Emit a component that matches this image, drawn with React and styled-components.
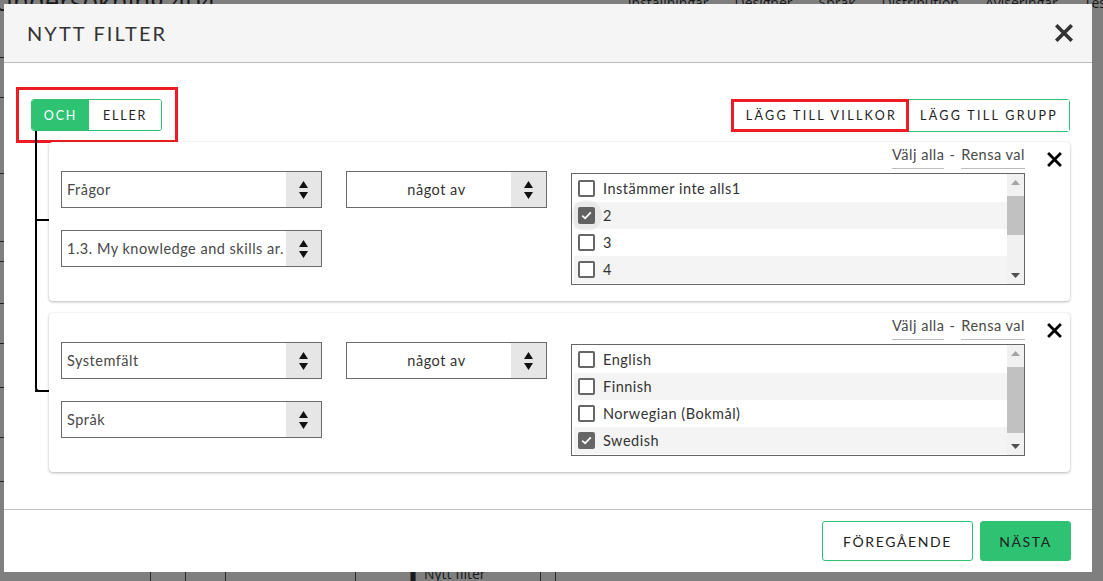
import React from "react";
import styled, { createGlobalStyle, css } from "styled-components";

const GREEN = "#2ec273";
const RED = "#ed1c24";

const Global = createGlobalStyle`
  html, body { margin: 0; padding: 0; width: 1103px; height: 581px; overflow: hidden; }
  body { font-family: Lato, "Open Sans", sans-serif; color: #333; }
  * { box-sizing: border-box; }
`;

/* ---------- page behind the modal ---------- */
const Page = styled.div`
  position: relative;
  width: 1103px;
  height: 581px;
  background: #fff;
  display: flex;
  flex-direction: column;
  overflow: hidden;
`;
const BackTop = styled.div`
  display: flex;
  justify-content: space-between;
  align-items: flex-end;
  height: 14px;
  margin-top: -4px;
  font-family: "Open Sans", sans-serif;
  color: #333;
`;
const BackTitle = styled.div`
  font-size: 26px;
  line-height: 18px;
  margin-left: -6px;
`;
const BackTabs = styled.div`
  display: flex;
  gap: 26px;
  font-size: 14px;
  line-height: 14px;
  margin-right: -8px;
`;
const BackMain = styled.div`
  flex: 1;
  display: flex;
  flex-direction: column;
`;
const BackRow = styled.div`
  height: ${(p) => p.$h}px;
  border-bottom: 1px solid #444;
  width: 12px;
`;
const BackBottom = styled.div`
  height: 16px;
  display: flex;
  align-items: center;
  padding-left: 150px;
  font-size: 14px;
  font-family: "Open Sans", sans-serif;
`;
const BackCell = styled.div`
  width: ${(p) => p.$w}px;
  height: 16px;
  border-left: 1px solid #555;
  display: flex;
  align-items: center;
  justify-content: center;
  gap: 6px;
`;
const Backdrop = styled.div`
  position: absolute;
  inset: 0;
  background: rgba(0, 0, 0, 0.5);
`;

/* ---------- modal ---------- */
const Modal = styled.div`
  position: absolute;
  top: 4px;
  left: 4px;
  width: 1088px;
  height: 568px;
  background: #fff;
  display: flex;
  flex-direction: column;
`;
const Header = styled.div`
  height: 59px;
  flex: none;
  background: #f5f5f5;
  border-bottom: 1px solid #bcbcbc;
  display: flex;
  align-items: center;
  justify-content: space-between;
  padding: 0 19px 0 23px;
`;
const Title = styled.h1`
  margin: 0;
  font-size: 20px;
  font-weight: 400;
  letter-spacing: 2.1px;
  color: #333;
`;
const IconButton = styled.button`
  border: none;
  background: transparent;
  padding: 0;
  display: flex;
  cursor: pointer;
  color: ${(p) => p.$color || "#333"};
`;
const Body = styled.div`
  flex: 1;
  padding: 36px 22px 0 27px;
`;
const TopRow = styled.div`
  display: flex;
  justify-content: space-between;
  align-items: flex-start;
  height: 32px;
`;
const Highlight = styled.div`
  position: relative;
  display: flex;
  &::after {
    content: "";
    position: absolute;
    pointer-events: none;
    border: 3px solid ${RED};
    ${(p) =>
      p.$wide
        ? css`inset: -12px -16px -12px -15px;`
        : css`inset: -1px 0 -1px -3px;`}
  }
`;
const Toggle = styled.div`
  display: flex;
  height: 32px;
  border: 1px solid ${GREEN};
  border-radius: 3px;
  overflow: hidden;
`;
const ToggleOption = styled.button`
  border: none;
  font-family: inherit;
  font-size: 12.5px;
  letter-spacing: 1.8px;
  padding: 0;
  width: ${(p) => p.$w}px;
  background: ${(p) => (p.$active ? GREEN : "#fff")};
  color: ${(p) => (p.$active ? "#fff" : "#222")};
  cursor: pointer;
`;
const ButtonGroup = styled.div`
  display: flex;
  height: 33px;
  border: 1px solid ${GREEN};
  border-radius: 3px;
`;
const GroupButton = styled.button`
  border: none;
  background: #fff;
  font-family: inherit;
  font-size: 12.5px;
  letter-spacing: 2.3px;
  color: #222;
  padding: 0 ${(p) => p.$pad || 12}px;
  height: 31px;
  cursor: pointer;
`;

const Tree = styled.div`
  position: relative;
  padding: 11px 0 0 18px;
  display: flex;
  flex-direction: column;
  gap: 12px;
  &::before {
    content: "";
    position: absolute;
    left: 4px;
    top: 0;
    bottom: 80px;
    width: 13px;
    border-left: 2px solid #000;
    border-bottom: 2px solid #000;
    border-bottom-left-radius: 4px;
  }
`;
const Card = styled.div`
  position: relative;
  height: 159px;
  background: #fff;
  border-radius: 4px;
  box-shadow: 0 1px 3px rgba(0, 0, 0, 0.28), 0 0 1px rgba(0, 0, 0, 0.15);
  display: grid;
  grid-template-columns: 261px 201px 454px 1fr;
  column-gap: 24px;
  padding-left: 12px;
  &::before {
    content: "";
    position: absolute;
    left: -14px;
    top: 77px;
    width: 14px;
    height: 2px;
    background: #000;
  }
`;
const SelectColumn = styled.div`
  padding-top: 29px;
  display: flex;
  flex-direction: column;
  gap: 22px;
`;
const SelectBox = styled.div`
  height: 37px;
  border: 1px solid #6b6b6b;
  display: flex;
  background: #fff;
`;
const SelectText = styled.div`
  flex: 1;
  display: flex;
  align-items: center;
  justify-content: ${(p) => (p.$center ? "center" : "flex-start")};
  padding-left: ${(p) => (p.$center ? 15 : 5)}px;
  font-size: 14.5px;
  letter-spacing: 0.5px;
  color: ${(p) => (p.$center ? "#333" : "#484848")};
  white-space: nowrap;
  overflow: hidden;
`;
const SelectArrows = styled.div`
  width: 35px;
  flex: none;
  background: #e6e6e6;
  display: flex;
  flex-direction: column;
  align-items: center;
  justify-content: center;
  gap: 4px;
`;
const ListColumn = styled.div`
  display: flex;
  flex-direction: column;
`;
const LinkRow = styled.div`
  height: 27px;
  display: flex;
  justify-content: flex-end;
  align-items: flex-end;
  font-size: 14.5px;
  letter-spacing: 0.5px;
  color: #484848;
  margin-bottom: 4px;
`;
const TextLink = styled.a`
  line-height: 18px;
  padding-bottom: 4px;
  border-bottom: 1px solid #bdbdbd;
  cursor: pointer;
`;
const Dash = styled.span`
  line-height: 18px;
  padding: 0 6px 5px 5px;
`;
const ListBox = styled.div`
  height: 112px;
  border: 1px solid #666;
  display: flex;
  background: #fff;
`;
const Rows = styled.div`
  flex: 1;
  padding: 1px 0 0 2px;
`;
const Row = styled.label`
  height: 27px;
  display: flex;
  align-items: center;
  gap: 8px;
  padding-left: 4px;
  font-size: 14.5px;
  letter-spacing: 0.5px;
  color: #333;
  background: ${(p) => (p.$alt ? "#f4f4f4" : "#fff")};
`;
const Check = styled.span`
  position: relative;
  width: 17px;
  height: 17px;
  flex: none;
  border: 2px solid #666;
  border-radius: 2px;
  background: ${(p) => (p.$checked ? "#666" : "#fff")};
  display: flex;
  align-items: center;
  justify-content: center;
  ${(p) =>
    p.$focus &&
    css`
      &::before {
        content: "";
        position: absolute;
        left: -9px;
        top: -9px;
        width: 31px;
        height: 31px;
        border-radius: 50%;
        background: rgba(0, 0, 0, 0.045);
        z-index: 0;
      }
    `}
  svg { position: relative; z-index: 1; }
`;
const Scrollbar = styled.div`
  width: 17px;
  background: #f1f1f1;
  display: flex;
  flex-direction: column;
  align-items: center;
`;
const ScrollArrow = styled.div`
  height: 17px;
  display: flex;
  align-items: center;
  justify-content: center;
`;
const Track = styled.div`
  flex: 1;
  width: 100%;
  position: relative;
`;
const Thumb = styled.div`
  position: absolute;
  left: 0;
  right: 0;
  top: ${(p) => p.$top}px;
  height: ${(p) => p.$h}px;
  background: #c1c1c1;
`;
const CloseColumn = styled.div`
  padding-top: 10px;
  margin-left: -2px;
`;

const Footer = styled.div`
  height: 63px;
  flex: none;
  border-top: 1px solid #c4c4c4;
  display: flex;
  justify-content: flex-end;
  align-items: center;
  gap: 7px;
  padding: 0 21px 0 0;
`;
const FooterButton = styled.button`
  height: 40px;
  width: ${(p) => p.$w}px;
  border: 1px solid ${GREEN};
  border-radius: 3px;
  background: ${(p) => (p.$primary ? GREEN : "#fff")};
  color: #222;
  font-family: inherit;
  font-size: 14px;
  letter-spacing: 1.6px;
  cursor: pointer;
`;

/* ---------- icons ---------- */
const CloseIcon = ({ size = 18, stroke = 3.6 }) => (
  <svg width={size} height={size} viewBox="0 0 18 18">
    <path d="M2.5 2.5 L15.5 15.5 M15.5 2.5 L2.5 15.5" stroke="currentColor" strokeWidth={stroke} strokeLinecap="square" fill="none" />
  </svg>
);
const Arrows = () => (
  <>
    <svg width="9" height="7" viewBox="0 0 9 7"><path d="M4.5 0 L9 7 L0 7 Z" fill="#111" /></svg>
    <svg width="9" height="7" viewBox="0 0 9 7"><path d="M0 0 L9 0 L4.5 7 Z" fill="#111" /></svg>
  </>
);
const Tick = () => (
  <svg width="11" height="9" viewBox="0 0 11 9">
    <path d="M1.2 4.6 L4.1 7.3 L9.8 1.3" stroke="#fff" strokeWidth="1.8" fill="none" />
  </svg>
);

const Select = ({ value, center }) => (
  <SelectBox>
    <SelectText $center={center}>{value}</SelectText>
    <SelectArrows><Arrows /></SelectArrows>
  </SelectBox>
);

const CheckList = ({ items, thumbTop, thumbH }) => (
  <ListBox>
    <Rows>
      {items.map((it, i) => (
        <Row key={it.label} $alt={i % 2 === 1}>
          <Check $checked={it.checked} $focus={it.focus}>{it.checked && <Tick />}</Check>
          {it.label}
        </Row>
      ))}
    </Rows>
    <Scrollbar>
      <ScrollArrow>
        <svg width="9" height="5" viewBox="0 0 9 5"><path d="M4.5 0 L9 5 L0 5 Z" fill="#a3a3a3" /></svg>
      </ScrollArrow>
      <Track>
        <Thumb $top={thumbTop} $h={thumbH} />
      </Track>
      <ScrollArrow>
        <svg width="9" height="5" viewBox="0 0 9 5"><path d="M0 0 L9 0 L4.5 5 Z" fill="#505050" /></svg>
      </ScrollArrow>
    </Scrollbar>
  </ListBox>
);

const Condition = ({ field, value, items, thumbTop, thumbH }) => (
  <Card>
    <SelectColumn>
      <Select value={field} />
      <Select value={value} />
    </SelectColumn>
    <SelectColumn>
      <Select value="något av" center />
    </SelectColumn>
    <ListColumn>
      <LinkRow>
        <TextLink>Välj alla</TextLink>
        <Dash>-</Dash>
        <TextLink>Rensa val</TextLink>
      </LinkRow>
      <CheckList items={items} thumbTop={thumbTop} thumbH={thumbH} />
    </ListColumn>
    <CloseColumn>
      <IconButton $color="#000"><CloseIcon size={15} stroke={3.4} /></IconButton>
    </CloseColumn>
  </Card>
);

export default function App() {
  return (
    <Page>
      <Global />
      <BackTop>
        <BackTitle>Undersökning 404</BackTitle>
        <BackTabs>
          <span>Inställningar</span>
          <span>Designer</span>
          <span>Språk</span>
          <span>Distribution</span>
          <span>Aviseringar</span>
          <span>Test</span>
        </BackTabs>
      </BackTop>
      <BackMain>
        <BackRow $h={48} />
        <BackRow $h={40} />
        <BackRow $h={76} />
        <BackRow $h={68} />
        <BackRow $h={20} />
        <BackRow $h={42} />
        <BackRow $h={40} />
        <BackRow $h={44} />
        <BackRow $h={50} />
        <BackRow $h={44} />
      </BackMain>
      <BackBottom>
        <BackCell $w={35} />
        <BackCell $w={40} />
        <BackCell $w={130} />
        <BackCell $w={185}>▌ Nytt filter</BackCell>
        <BackCell $w={15} />
        <BackCell $w={200} />
      </BackBottom>
      <Backdrop />
      <Modal>
        <Header>
          <Title>NYTT FILTER</Title>
          <IconButton><CloseIcon /></IconButton>
        </Header>
        <Body>
          <TopRow>
            <Highlight $wide>
              <Toggle>
                <ToggleOption $active $w={57}>OCH</ToggleOption>
                <ToggleOption $w={72}>ELLER</ToggleOption>
              </Toggle>
            </Highlight>
            <ButtonGroup>
              <Highlight>
                <GroupButton $pad={12}>LÄGG TILL VILLKOR</GroupButton>
              </Highlight>
              <GroupButton $pad={11}>LÄGG TILL GRUPP</GroupButton>
            </ButtonGroup>
          </TopRow>
          <Tree>
            <Condition
              field="Frågor"
              value="1.3. My knowledge and skills ar."
              thumbTop={5}
              thumbH={39}
              items={[
                { label: "Instämmer inte alls1" },
                { label: "2", checked: true, focus: true },
                { label: "3" },
                { label: "4" },
              ]}
            />
            <Condition
              field="Systemfält"
              value="Språk"
              thumbTop={5}
              thumbH={66}
              items={[
                { label: "English" },
                { label: "Finnish" },
                { label: "Norwegian (Bokmål)" },
                { label: "Swedish", checked: true },
              ]}
            />
          </Tree>
        </Body>
        <Footer>
          <FooterButton $w={151}>FÖREGÅENDE</FooterButton>
          <FooterButton $w={91} $primary>NÄSTA</FooterButton>
        </Footer>
      </Modal>
    </Page>
  );
}
